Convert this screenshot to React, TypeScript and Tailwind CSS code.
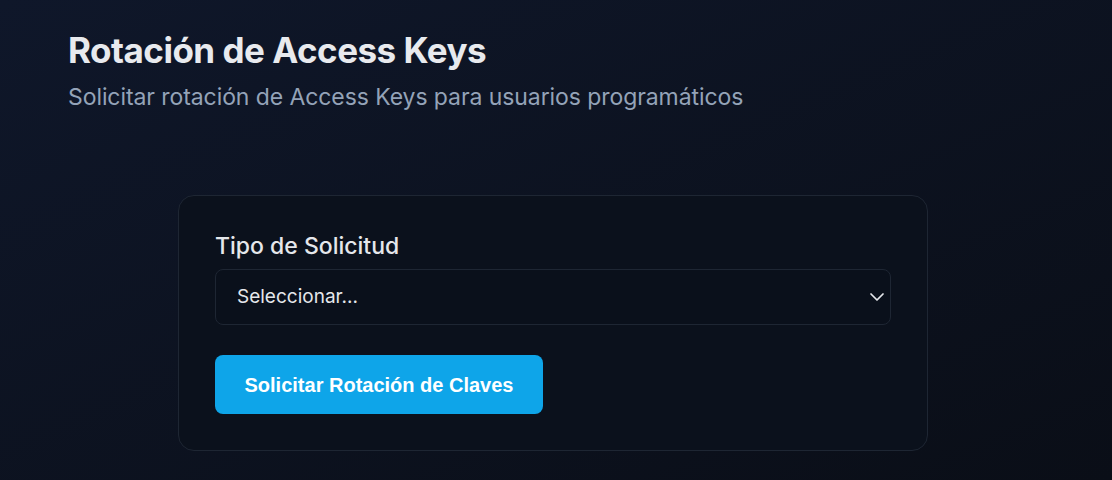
import { ChevronDown } from "lucide-react";

export default function App() {
  return (
    <div className="min-h-[480px] w-full bg-gradient-to-br from-[#0f172a] to-[#0a0e17] font-['Inter',sans-serif] text-slate-100">
      <div className="px-[68px] pt-[30px]">
        <h1 className="text-[35px] font-bold leading-[40px] tracking-[-0.5px] text-[#e8eaee]">
          Rotación de Access Keys
        </h1>
        <p className="mt-[11px] text-[23px] leading-[32px] tracking-[-0.08px] text-[#94a3b8]">
          Solicitar rotación de Access Keys para usuarios programáticos
        </p>
      </div>

      <div className="ml-[178px] mt-[82px] w-[750px] rounded-2xl border border-[#1e2633] bg-[#0b111c] px-[36px] pt-[34px] pb-[36px]">
        <label className="block text-[23px] font-medium leading-[32px] text-[#e5e7eb]">
          Tipo de Solicitud
        </label>
        <div className="relative mt-[7px]">
          <select className="h-[56px] w-full appearance-none rounded-lg border border-[#1e2633] bg-[#0a101b] pl-[21px] pr-10 text-[19px] text-[#e5e7eb] outline-none">
            <option>Seleccionar...</option>
          </select>
          <ChevronDown
            className="pointer-events-none absolute right-[2px] top-1/2 h-[24px] w-[24px] -translate-y-1/2 text-[#e5e7eb]"
            strokeWidth={1.75}
          />
        </div>
        <button className="mt-[30px] h-[59px] w-[328px] rounded-lg bg-[#0ea5e9] font-['Liberation_Sans',Arial,sans-serif] text-[20px] font-bold text-white">
          Solicitar Rotación de Claves
        </button>
      </div>
    </div>
  );
}
